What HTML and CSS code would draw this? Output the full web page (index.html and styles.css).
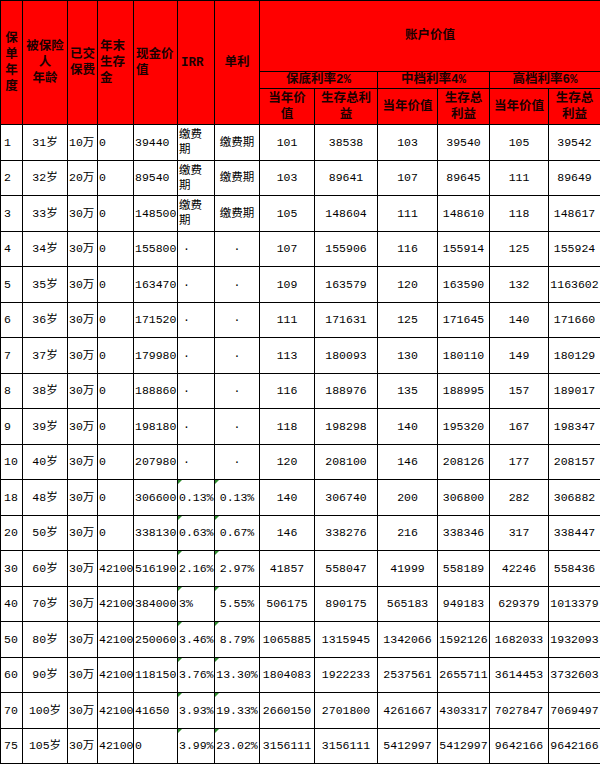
FILE: index.html
```html
<!DOCTYPE html>
<html lang="zh-CN">
<head>
<meta charset="utf-8">
<title>账户价值演示表</title>
<link rel="stylesheet" href="styles.css">
</head>
<body>
<table class="policy">
  <colgroup>
    <col class="w22"><col class="w45"><col class="w30"><col class="w36"><col class="w44"><col class="w37"><col class="w45">
    <col class="w55"><col class="w63"><col class="w60"><col class="w52"><col class="w59"><col class="w52">
  </colgroup>
  <thead>
    <tr class="h1">
      <th rowspan="3" class="ctr">保<br>单<br>年<br>度</th>
      <th rowspan="3" class="ctr">被保险<br>人<br>年龄</th>
      <th rowspan="3" class="lft">已交<br>保费</th>
      <th rowspan="3" class="lft">年末<br>生存<br>金</th>
      <th rowspan="3" class="lft">现金价<br>值</th>
      <th rowspan="3" class="lft irr">IRR</th>
      <th rowspan="3" class="ctr">单利</th>
      <th colspan="6" class="ctr">账户价值</th>
    </tr>
    <tr class="h2">
      <th colspan="2" class="ctr">保底利率2%</th>
      <th colspan="2" class="ctr">中档利率4%</th>
      <th colspan="2" class="ctr">高档利率6%</th>
    </tr>
    <tr class="h3">
      <th class="ctr">当年价<br>值</th>
      <th class="ctr">生存总利<br>益</th>
      <th class="ctr">当年价值</th>
      <th class="ctr">生存总<br>利益</th>
      <th class="ctr">当年价值</th>
      <th class="ctr">生存总<br>利益</th>
    </tr>
  </thead>
  <tbody>
    <tr><td class="yr">1</td><td>31岁</td><td>10万</td><td>0</td><td>39440</td><td>缴费<br>期</td><td>缴费期</td><td>101</td><td>38538</td><td>103</td><td>39540</td><td>105</td><td>39542</td></tr>
    <tr><td class="yr">2</td><td>32岁</td><td>20万</td><td>0</td><td>89540</td><td>缴费<br>期</td><td>缴费期</td><td>103</td><td>89641</td><td>107</td><td>89645</td><td>111</td><td>89649</td></tr>
    <tr><td class="yr">3</td><td>33岁</td><td>30万</td><td>0</td><td>148500</td><td>缴费<br>期</td><td>缴费期</td><td>105</td><td>148604</td><td>111</td><td>148610</td><td>118</td><td>148617</td></tr>
    <tr><td class="yr">4</td><td>34岁</td><td>30万</td><td>0</td><td>155800</td><td class="dot">·</td><td>·</td><td>107</td><td>155906</td><td>116</td><td>155914</td><td>125</td><td>155924</td></tr>
    <tr><td class="yr">5</td><td>35岁</td><td>30万</td><td>0</td><td>163470</td><td class="dot">·</td><td>·</td><td>109</td><td>163579</td><td>120</td><td>163590</td><td>132</td><td>1163602</td></tr>
    <tr><td class="yr">6</td><td>36岁</td><td>30万</td><td>0</td><td>171520</td><td class="dot">·</td><td>·</td><td>111</td><td>171631</td><td>125</td><td>171645</td><td>140</td><td>171660</td></tr>
    <tr><td class="yr">7</td><td>37岁</td><td>30万</td><td>0</td><td>179980</td><td class="dot">·</td><td>·</td><td>113</td><td>180093</td><td>130</td><td>180110</td><td>149</td><td>180129</td></tr>
    <tr><td class="yr">8</td><td>38岁</td><td>30万</td><td>0</td><td>188860</td><td class="dot">·</td><td>·</td><td>116</td><td>188976</td><td>135</td><td>188995</td><td>157</td><td>189017</td></tr>
    <tr><td class="yr">9</td><td>39岁</td><td>30万</td><td>0</td><td>198180</td><td class="dot">·</td><td>·</td><td>118</td><td>198298</td><td>140</td><td>195320</td><td>167</td><td>198347</td></tr>
    <tr><td class="yr">10</td><td>40岁</td><td>30万</td><td>0</td><td>207980</td><td class="dot">·</td><td>·</td><td>120</td><td>208100</td><td>146</td><td>208126</td><td>177</td><td>208157</td></tr>
    <tr><td class="yr">18</td><td>48岁</td><td>30万</td><td>0</td><td>306600</td><td class="flag">0.13%</td><td class="flag">0.13%</td><td>140</td><td>306740</td><td>200</td><td>306800</td><td>282</td><td>306882</td></tr>
    <tr><td class="yr">20</td><td>50岁</td><td>30万</td><td>0</td><td>338130</td><td class="flag">0.63%</td><td class="flag">0.67%</td><td>146</td><td>338276</td><td>216</td><td>338346</td><td>317</td><td>338447</td></tr>
    <tr><td class="yr">30</td><td>60岁</td><td>30万</td><td>42100</td><td>516190</td><td class="flag">2.16%</td><td class="flag">2.97%</td><td>41857</td><td>558047</td><td>41999</td><td>558189</td><td>42246</td><td>558436</td></tr>
    <tr><td class="yr">40</td><td>70岁</td><td>30万</td><td>42100</td><td>384000</td><td class="flag">3%</td><td class="flag">5.55%</td><td>506175</td><td>890175</td><td>565183</td><td>949183</td><td>629379</td><td>1013379</td></tr>
    <tr><td class="yr">50</td><td>80岁</td><td>30万</td><td>42100</td><td>250060</td><td class="flag">3.46%</td><td class="flag">8.79%</td><td>1065885</td><td>1315945</td><td>1342066</td><td>1592126</td><td>1682033</td><td>1932093</td></tr>
    <tr><td class="yr">60</td><td>90岁</td><td>30万</td><td>42100</td><td>118150</td><td class="flag">3.76%</td><td class="flag">13.30%</td><td>1804083</td><td>1922233</td><td>2537561</td><td>2655711</td><td>3614453</td><td>3732603</td></tr>
    <tr><td class="yr">70</td><td>100岁</td><td>30万</td><td>42100</td><td>41650</td><td class="flag">3.93%</td><td class="flag">19.33%</td><td>2660150</td><td>2701800</td><td>4261667</td><td>4303317</td><td>7027847</td><td>7069497</td></tr>
    <tr><td class="yr">75</td><td>105岁</td><td>30万</td><td>42100</td><td>0</td><td class="flag">3.99%</td><td class="flag">23.02%</td><td>3156111</td><td>3156111</td><td>5412997</td><td>5412997</td><td>9642166</td><td>9642166</td></tr>
  </tbody>
</table>
</body>
</html>
```

FILE: styles.css
```css
html, body {
  margin: 0;
  padding: 0;
  background: #ffffff;
}

.policy {
  width: 600px;
  border-collapse: collapse;
  table-layout: fixed;
  font-family: "Liberation Mono", "Noto Sans CJK SC", monospace;
  font-size: 11.5px;
  color: #000000;
}

.w22 { width: 22px; }
.w30 { width: 30px; }
.w36 { width: 36px; }
.w37 { width: 37px; }
.w44 { width: 44px; }
.w45 { width: 45px; }
.w52 { width: 52px; }
.w55 { width: 55px; }
.w59 { width: 59px; }
.w60 { width: 60px; }
.w63 { width: 63px; }

.policy th,
.policy td {
  border: 1px solid #000000;
  padding: 0 1px;
  vertical-align: middle;
  white-space: nowrap;
  overflow: visible;
}

.policy th {
  background: #ff0000;
  color: #1a0000;
  font-weight: bold;
  font-size: 12.5px;
  line-height: 16px;
}

.policy th.ctr { text-align: center; }
.policy th.lft { text-align: left; padding-left: 2px; }
.policy th.irr { padding-left: 3px; }

.h1 { height: 71px; }
.h2 { height: 17px; }
.h3 { height: 36px; }

.policy tbody tr { height: 35.5px; }

.policy td {
  line-height: 15px;
  text-align: center;
}

.policy td:nth-child(1),
.policy td:nth-child(3),
.policy td:nth-child(4),
.policy td:nth-child(5),
.policy td:nth-child(6) {
  text-align: left;
}

.policy td.yr { padding-left: 3px; }
.policy td.dot { padding-left: 5px; }

.policy td.flag { position: relative; }
.policy td.flag::before {
  content: "";
  position: absolute;
  left: 0;
  top: 0;
  border-top: 4px solid #2e8b2e;
  border-right: 4px solid transparent;
}
```
